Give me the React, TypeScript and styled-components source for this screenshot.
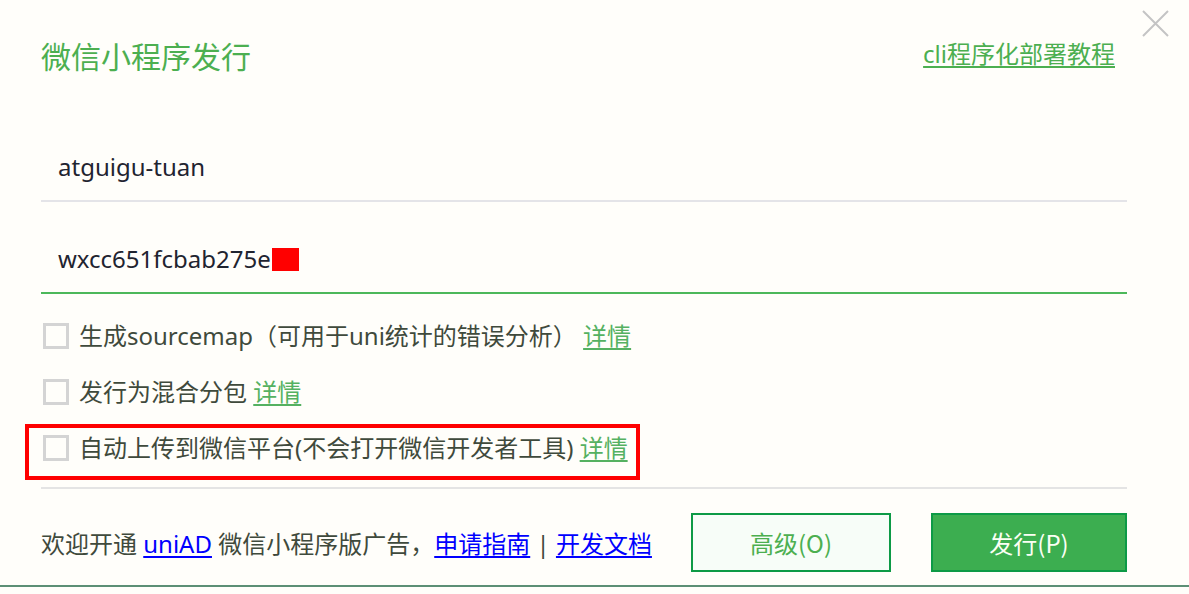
import React, { useState } from 'react';
import styled, { createGlobalStyle } from 'styled-components';

const GlobalStyle = createGlobalStyle`
  html, body {
    margin: 0;
    padding: 0;
    background: #fffefa;
  }
  body {
    font-family: "Noto Sans", "Noto Sans CJK SC", sans-serif;
  }
`;

const Dialog = styled.div`
  position: relative;
  width: 1189px;
  height: 594px;
  box-sizing: border-box;
  background: #fffefa;
  overflow: hidden;
`;

const Body = styled.div`
  padding: 0 62px 0 41px;
`;

const Header = styled.div`
  height: 110px;
  display: flex;
  align-items: flex-start;
  justify-content: space-between;
  padding-top: 34px;
  box-sizing: border-box;
`;

const Title = styled.h1`
  margin: 0;
  font-family: "Noto Sans CJK SC", "Noto Sans", sans-serif;
  font-weight: 400;
  font-size: 30px;
  line-height: 42px;
  color: #4caf50;
`;

const TutorialLink = styled.a`
  margin-top: 4px;
  margin-right: 12px;
  font-family: "Noto Sans", "Noto Sans CJK SC", sans-serif;
  font-size: 24px;
  line-height: 32px;
  color: #4caf50;
  text-decoration: underline;
  text-underline-offset: 3px;
  cursor: pointer;
`;

const CloseButton = styled.button`
  position: absolute;
  top: 10px;
  right: 20px;
  width: 27px;
  height: 27px;
  padding: 0;
  border: none;
  background: transparent;
  cursor: pointer;
`;

const Field = styled.div<{ active?: boolean }>`
  height: 92px;
  display: flex;
  align-items: flex-end;
  padding: 0 0 17px 17px;
  box-sizing: border-box;
  border-bottom: 2px solid ${(p) => (p.active ? '#4cb85a' : '#e4e4e8')};
`;

const FieldText = styled.span`
  font-size: 24px;
  line-height: 32px;
  color: #1f2430;
  display: inline-flex;
  align-items: center;
`;

const Redacted = styled.span`
  display: inline-block;
  width: 27px;
  height: 23px;
  background: #ff0000;
  margin-left: 1px;
`;

const Options = styled.div`
  padding: 14px 0 11px 2px;
  border-bottom: 2px solid #e4e4e4;
`;

const OptionRow = styled.label<{ highlighted?: boolean }>`
  position: relative;
  height: 56px;
  width: fit-content;
  display: flex;
  align-items: center;
  gap: 10px;
  cursor: pointer;

  ${(p) =>
    p.highlighted &&
    `
    &::after {
      content: '';
      position: absolute;
      left: -18px;
      right: -12px;
      top: 4px;
      bottom: -4px;
      border: 4px solid #ff0000;
      pointer-events: none;
    }
  `}
`;

const Box = styled.span<{ checked: boolean }>`
  width: 26px;
  height: 26px;
  box-sizing: border-box;
  border: 3px solid #d4d4d4;
  background: ${(p) => (p.checked ? '#4caf50' : 'transparent')};
  flex-shrink: 0;
`;

const OptionText = styled.span`
  font-size: 24px;
  line-height: 32px;
  color: #3f4a3c;
`;

const Detail = styled.a`
  color: #55b161;
  text-decoration: underline;
  text-underline-offset: 3px;
`;

const Footer = styled.div`
  height: 96px;
  padding-top: 11px;
  box-sizing: border-box;
  display: flex;
  align-items: center;
  justify-content: space-between;
`;

const Notice = styled.div`
  font-size: 24px;
  line-height: 32px;
  color: #3f4a3c;
  margin-top: 2px;
`;

const BlueLink = styled.a`
  color: #0000ff;
  text-decoration: underline;
  text-underline-offset: 3px;
`;

const Buttons = styled.div`
  display: flex;
  gap: 40px;
`;

const Button = styled.button<{ primary?: boolean }>`
  width: ${(p) => (p.primary ? '196px' : '200px')};
  height: 59px;
  box-sizing: border-box;
  border: 2px solid #0d9a46;
  background: ${(p) => (p.primary ? '#3cae50' : '#f7fdf8')};
  color: ${(p) => (p.primary ? '#fbfff4' : '#4caf50')};
  font-family: "Noto Sans CJK SC", "Noto Sans", sans-serif;
  font-size: 24px;
  cursor: pointer;
`;

const BottomRule = styled.div`
  border-top: 2px solid #5c8f75;
`;

const options = [
  { id: 'sourcemap', text: '生成sourcemap（可用于uni统计的错误分析） ' },
  { id: 'mixed', text: '发行为混合分包 ' },
  { id: 'upload', text: '自动上传到微信平台(不会打开微信开发者工具) ', highlighted: true },
];

export default function App() {
  const [checked, setChecked] = useState<{ [key: string]: boolean }>({});

  return (
    <Dialog>
      <GlobalStyle />
      <CloseButton aria-label="close">
        <svg width="27" height="27" viewBox="0 0 27 27">
          <path d="M1 1 L26 26 M26 1 L1 26" stroke="#c4c4c4" strokeWidth="2" fill="none" />
        </svg>
      </CloseButton>
      <Body>
        <Header>
          <Title>微信小程序发行</Title>
          <TutorialLink>cli程序化部署教程</TutorialLink>
        </Header>
        <Field>
          <FieldText>atguigu-tuan</FieldText>
        </Field>
        <Field active>
          <FieldText>
            wxcc651fcbab275e
            <Redacted />
          </FieldText>
        </Field>
        <Options>
          {options.map((o) => (
            <OptionRow
              key={o.id}
              highlighted={o.highlighted}
              onClick={() => setChecked({ ...checked, [o.id]: !checked[o.id] })}
            >
              <Box checked={!!checked[o.id]} />
              <OptionText>
                {o.text}
                <Detail>详情</Detail>
              </OptionText>
            </OptionRow>
          ))}
        </Options>
        <Footer>
          <Notice>
            欢迎开通 <BlueLink>uniAD</BlueLink> 微信小程序版广告，<BlueLink>申请指南</BlueLink> |{' '}
            <BlueLink>开发文档</BlueLink>
          </Notice>
          <Buttons>
            <Button>高级(O)</Button>
            <Button primary>发行(P)</Button>
          </Buttons>
        </Footer>
      </Body>
      <BottomRule />
    </Dialog>
  );
}
